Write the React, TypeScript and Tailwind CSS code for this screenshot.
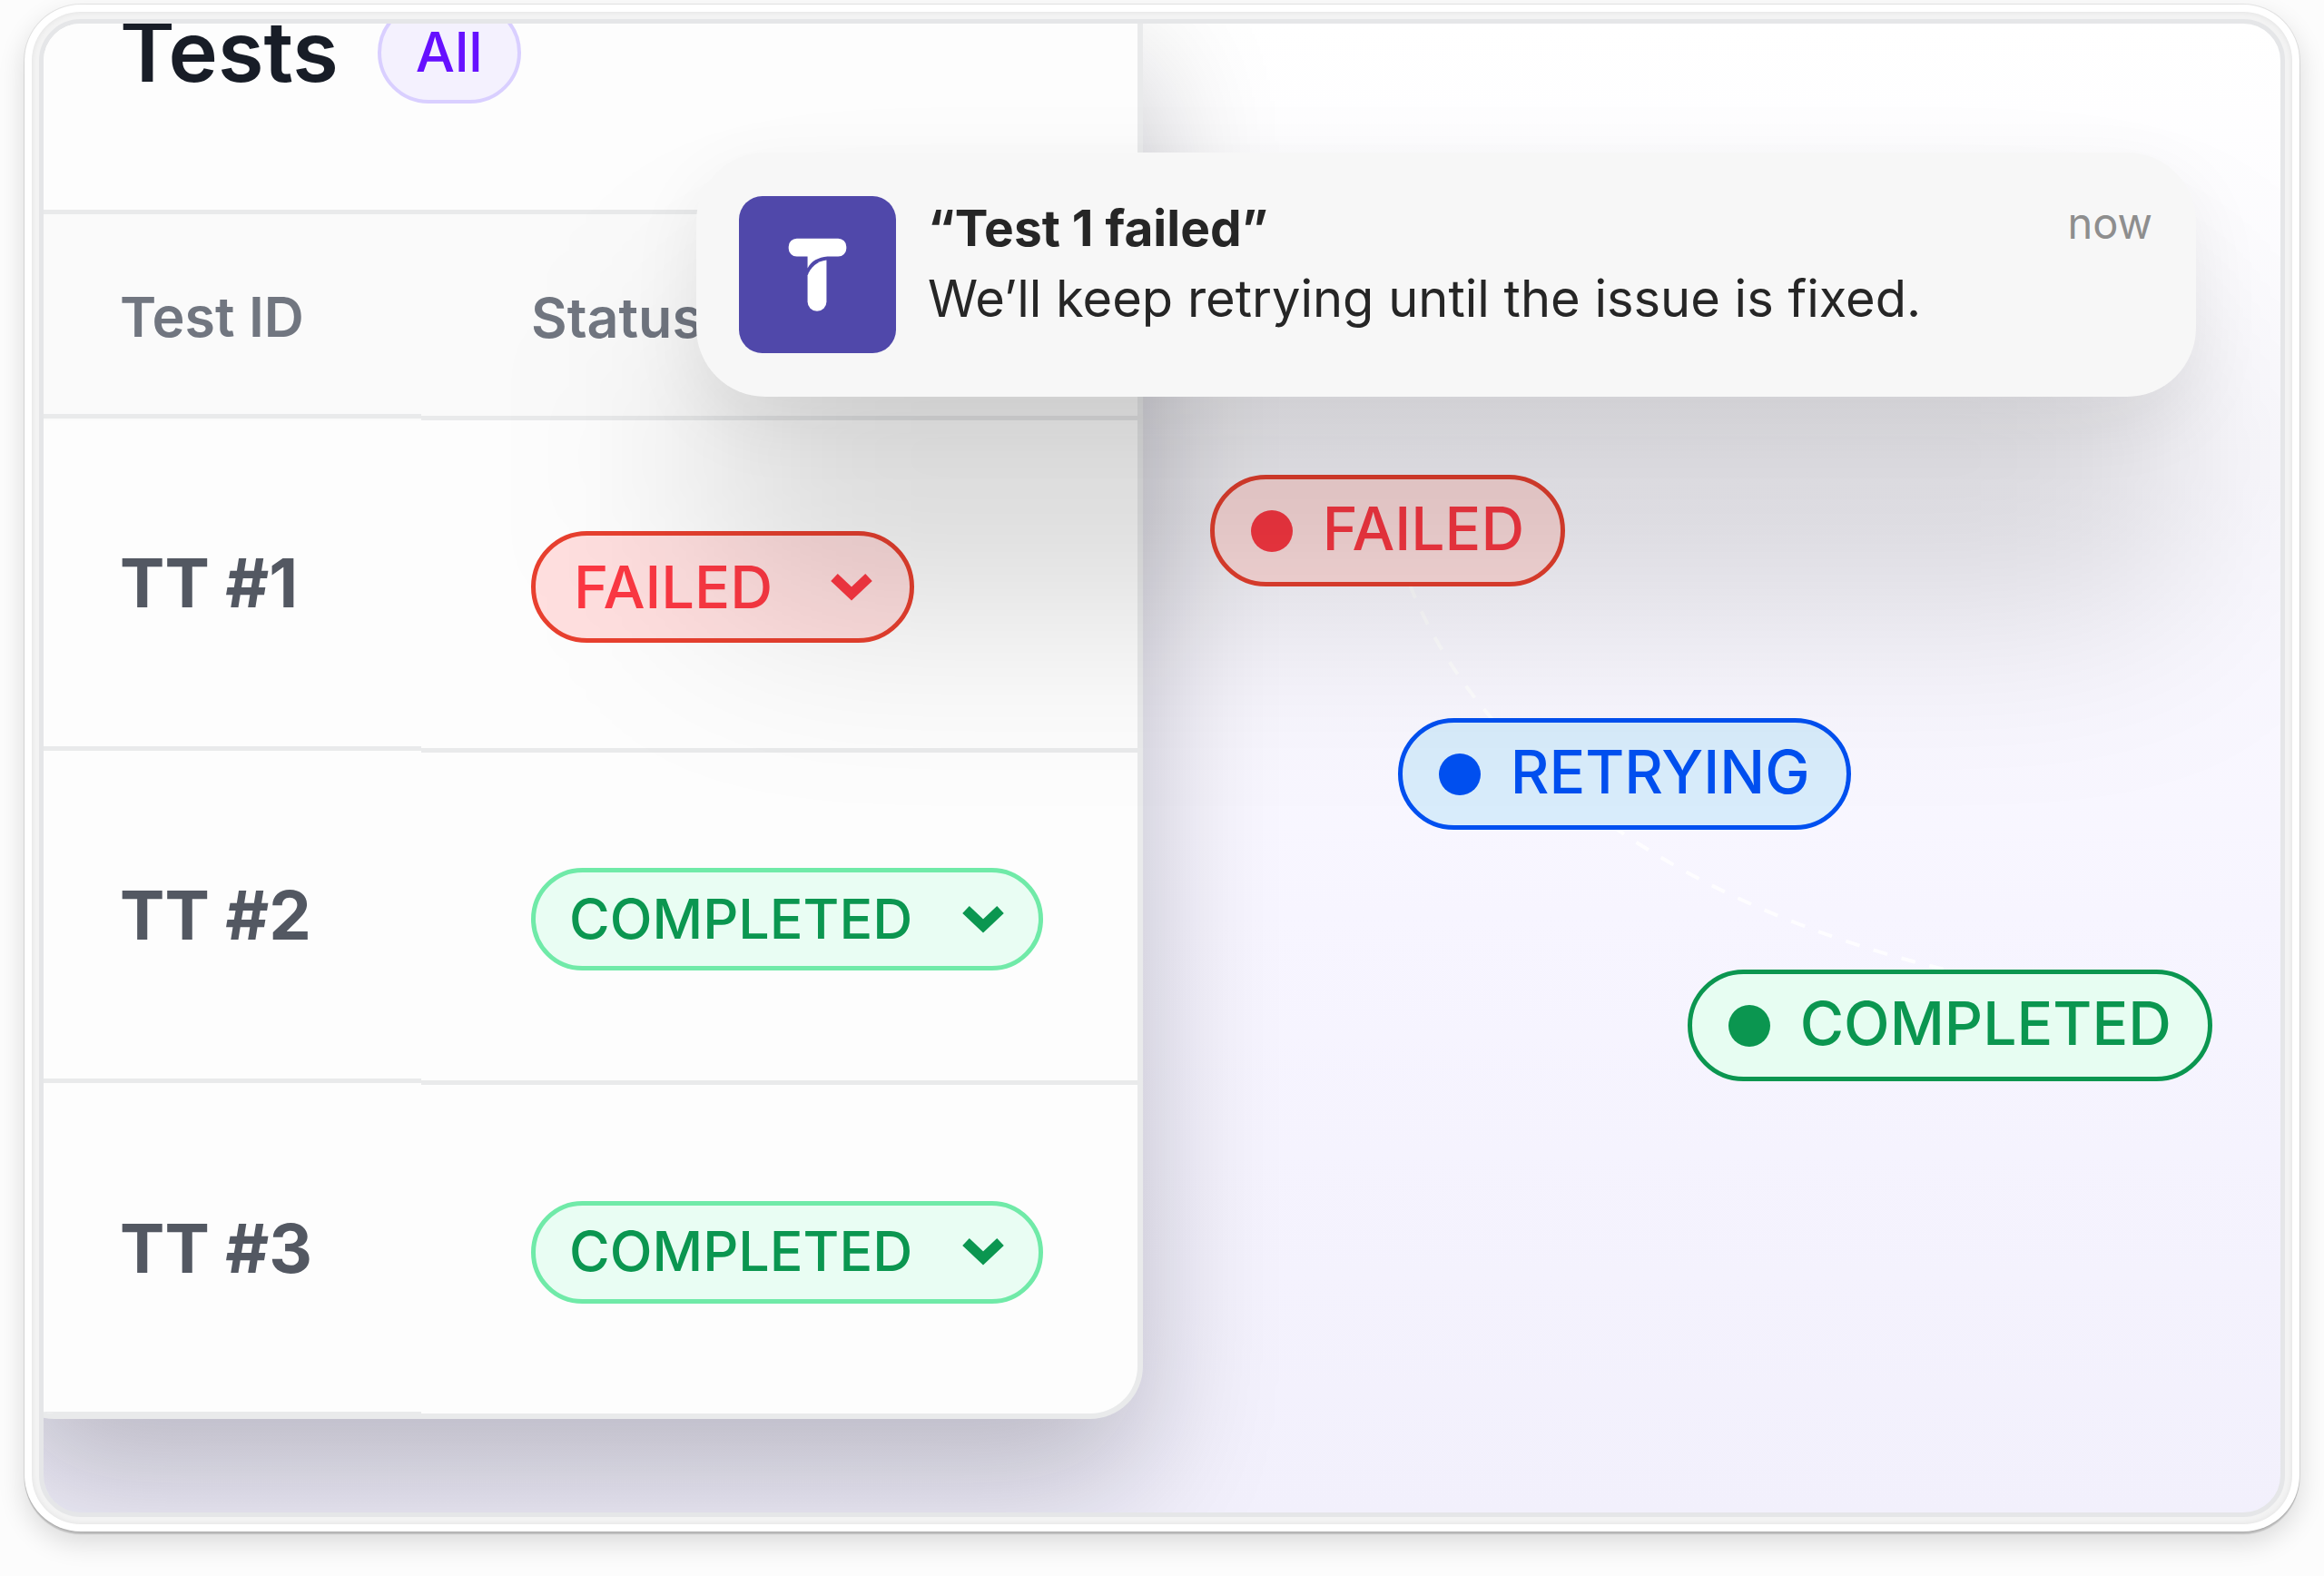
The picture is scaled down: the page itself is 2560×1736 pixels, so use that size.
import clsx from "clsx";

type Tone = "failed" | "retrying" | "completed";

const rows: { id: string; status: Tone }[] = [
  { id: "TT #1", status: "failed" },
  { id: "TT #2", status: "completed" },
  { id: "TT #3", status: "completed" },
];

const labels: Record<Tone, string> = {
  failed: "FAILED",
  retrying: "RETRYING",
  completed: "COMPLETED",
};

const tagTones: Record<Tone, string> = {
  failed: "border-[#e8402f] bg-[#ffdfdf] text-[#fc3843]",
  retrying: "border-[#0050f0] bg-[#d8ecfb] text-[#0050f0]",
  completed: "border-[#0b9650] bg-[#e7fdf2] text-[#0b9650]",
};

function Chevron() {
  return (
    <svg className="h-8 w-12" viewBox="0 0 48 32" fill="none" stroke="currentColor" strokeWidth="11" aria-hidden="true">
      <path d="M5 5l19 18L43 5" />
    </svg>
  );
}

function StatusButton({ status }: { status: Tone }) {
  return (
    <button
      type="button"
      className={clsx(
        "flex items-center justify-between rounded-full font-medium",
        status === "failed"
          ? "h-[123px] w-[422px] border-[5px] border-[#e8402f] bg-[#ffdfdf] pr-10 pl-[42px] text-[65px] text-[#fc3843]"
          : "h-[113px] w-[564px] border-[5px] border-[#70eaa8] bg-[#e9fdf3] pr-[37px] pl-[37px] text-[61px] text-[#0b9650]",
      )}
    >
      {labels[status]}
      <Chevron />
    </button>
  );
}

function Tag({ status, className }: { status: Tone; className: string }) {
  return (
    <div
      className={clsx(
        "absolute flex h-[123px] items-center gap-[33px] rounded-full border-[5px] px-10 text-[66px] font-medium",
        tagTones[status],
        className,
      )}
    >
      <span className="size-[46px] rounded-full bg-current" />
      <span className="pb-1">{labels[status]}</span>
    </div>
  );
}

function TestsCard() {
  return (
    <section className="-mt-6 -ml-[46px] w-[51%] shrink-0 self-start overflow-hidden rounded-b-[58px] border-x-[6px] border-b-[6px] border-[#e9eaeb] bg-[#fdfdfd] shadow-[0_70px_150px_rgba(10,10,20,0.24)]">
      <header className="flex h-[234px] items-start border-b-[5px] border-[#e9eaeb] pl-[124px]">
        <h1 className="text-[92px] leading-[110px] font-semibold text-[#181d27]">Tests</h1>
        <button
          type="button"
          className="ml-[43px] h-28 w-[158px] rounded-full border-4 border-[#d9cfff] bg-[#f4f1fe] text-[61px] font-medium text-[#6610ff]"
        >
          All
        </button>
      </header>
      <table className="w-full border-separate border-spacing-0 text-left">
        <thead>
          <tr className="bg-[#fafafa]">
            <th className="w-[456px] p-0 align-top font-semibold">
              <div className="flex h-[225px] items-center border-b-[5px] border-[#e9eaeb] pt-2 pl-[124px] text-[61px] text-[#717680]">
                Test ID
              </div>
            </th>
            <th className="p-0 align-top font-semibold">
              <div className="flex h-[227px] items-center border-b-[5px] border-[#e9eaeb] pt-2 pl-[121px] text-[61px] text-[#717680]">
                Status
              </div>
            </th>
          </tr>
        </thead>
        <tbody>
          {rows.map(({ id, status }) => (
            <tr key={id} className="group">
              <td className="p-0 align-top">
                <div className="flex h-[364px] items-center border-b-[5px] border-[#e9eaeb] pl-[124px] text-[74px] font-bold text-[#535862] group-last:h-[362px] group-last:border-b-2">
                  {id}
                </div>
              </td>
              <td className="p-0 align-top">
                <div className="flex h-[366px] items-center border-b-[5px] border-[#e9eaeb] pt-1.5 pl-[121px] group-last:h-[362px] group-last:border-b-0">
                  <StatusButton status={status} />
                </div>
              </td>
            </tr>
          ))}
        </tbody>
      </table>
    </section>
  );
}

function RetryFlow() {
  return (
    <div className="relative flex-1">
      <svg className="absolute top-0 left-0 h-[1200px] w-[1250px]" viewBox="0 0 1250 1200" fill="none" aria-hidden="true">
        <path
          d="M294 618C365 800 570 970 900 1046"
          stroke="#fff"
          strokeOpacity="0.8"
          strokeWidth="4"
          strokeDasharray="16 16"
        />
      </svg>
      <Tag status="failed" className="top-[497px] left-[74px]" />
      <Tag status="retrying" className="top-[765px] left-[281px]" />
      <Tag status="completed" className="top-[1042px] left-[600px]" />
    </div>
  );
}

function TeamsLogo() {
  return (
    <svg className="size-[173px] shrink-0" viewBox="0 0 174 174" aria-hidden="true">
      <rect width="174" height="174" rx="26" fill="#5048aa" />
      <path
        fill="#fff"
        d="M64 47h46a9 9 0 0 1 9 9v2a9 9 0 0 1-9 9H98c-10 1-18 5-22 13V67H64a9 9 0 0 1-9-9v-2a9 9 0 0 1 9-9z"
      />
      <path fill="#fff" d="M97 71v46a10.500 10.500 0 0 1-21 0V88c3-9 11-16 21-17z" />
    </svg>
  );
}

function Notification() {
  return (
    <div className="absolute top-[142px] right-[93px] left-[719px]">
      {/* wide soft shadow under the toast */}
      <div className="absolute inset-x-4 top-[170px] h-[330px] rounded-[76px] bg-black/14 blur-[110px]" />
      <article className="relative flex h-[269px] rounded-[76px] bg-[#f7f7f7] py-12 pr-12 pl-[47px] text-[56px] leading-[78px] text-[#262626] shadow-[0_30px_80px_rgba(0,0,0,0.07)]">
        <TeamsLogo />
        <div className="ml-[35px] flex-1">
          <h2 className="-mt-1 text-[55px] font-bold">“Test 1 failed”</h2>
          <p>We’ll keep retrying until the issue is fixed.</p>
        </div>
        <time className="text-[47px] leading-[60px] text-[#8e8e8e]">now</time>
      </article>
    </div>
  );
}

export default function App() {
  return (
    <main className="flex min-h-screen flex-col bg-[#fcfcfc] px-[27px] pt-[5px] pb-[49px] font-['Inter',sans-serif]">
      <div className="flex flex-1 flex-col rounded-[62px] bg-white p-2 shadow-[0_0_0_1px_rgba(0,0,0,0.08),0_3px_1px_rgba(0,0,0,0.16),0_12px_30px_rgba(0,0,0,0.14)]">
        <div className="flex flex-1 flex-col rounded-[54px] bg-[#f3f3f3] p-2 shadow-[inset_0_0_6px_rgba(0,0,0,0.08)]">
          <div className="relative flex flex-1 overflow-hidden rounded-[46px] border-[5px] border-[#e5e6e8] bg-linear-to-b from-white via-[#f7f5ff] via-60% to-[#f2f0fc]">
            <TestsCard />
            <RetryFlow />
            <Notification />
          </div>
        </div>
      </div>
    </main>
  );
}
